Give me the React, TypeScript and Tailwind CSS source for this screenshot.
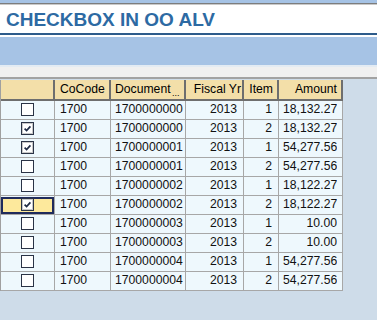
import React from "react";

type Row = { c: boolean; sel?: boolean; doc: string; item: string; amt: string };

const rows: Row[] = [
  { c: false, doc: "1700000000", item: "1", amt: "18,132.27" },
  { c: true, doc: "1700000000", item: "2", amt: "18,132.27" },
  { c: true, doc: "1700000001", item: "1", amt: "54,277.56" },
  { c: false, doc: "1700000001", item: "2", amt: "54,277.56" },
  { c: false, doc: "1700000002", item: "1", amt: "18,122.27" },
  { c: true, sel: true, doc: "1700000002", item: "2", amt: "18,122.27" },
  { c: false, doc: "1700000003", item: "1", amt: "10.00" },
  { c: false, doc: "1700000003", item: "2", amt: "10.00" },
  { c: false, doc: "1700000004", item: "1", amt: "54,277.56" },
  { c: false, doc: "1700000004", item: "2", amt: "54,277.56" },
];

function Box({ checked }: { checked: boolean }) {
  return (
    <div
      className={
        "relative z-10 w-[13px] h-[13px] border border-[#2a3346] bg-white flex items-center justify-center " +
        (checked ? "shadow-[inset_0_0_0_1px_#c9c9c9]" : "")
      }
    >
      {checked && (
        <svg width="9" height="9" viewBox="0 0 9 9">
          <path d="M1.6 4.6 L3.6 6.6 L7.4 2.4" stroke="#1e2a44" strokeWidth="1.7" fill="none" />
        </svg>
      )}
    </div>
  );
}

const hCell =
  "relative h-[21px] bg-[#f3dfa9] border-r-2 border-b-2 border-[#6e6e6e] flex items-center text-[12.2px] text-black whitespace-nowrap overflow-hidden";
const dCell =
  "relative h-[19px] bg-[#eef8fd] border-r border-b border-[#a7a7a7] flex items-center text-[12.2px] text-[#111] whitespace-nowrap overflow-hidden pb-[1px]";

export default function App() {
  return (
    <div className="w-[377px] h-[320px] overflow-hidden bg-[#cedce9] font-['Liberation_Sans',Arial,sans-serif]">
      <div className="h-[3px] bg-[#a6c3e5]" />
      <div className="h-[1px] bg-[#7d7d7d]" />
      <div className="h-[1px] bg-[#c9c9c9]" />
      <div className="h-[28px] bg-white pl-[6px] pt-[5px]">
        <span className="block text-[19px] leading-[19px] font-bold text-[#2d6aa3]">CHECKBOX IN OO ALV</span>
      </div>
      <div className="h-[2px] bg-[#2d5b8a]" />
      <div className="h-[2px] bg-white" />
      <div className="h-[28px] bg-[#a6c3e5]" />
      <div className="h-[2px] bg-[#e3ebf3]" />
      <div className="h-[10px] bg-[#f0f0f0]" />
      <div className="h-[2px] bg-[#a2a2a2]" />
      <div className="h-[1px] bg-[#cedce9]" />

      <div className="w-[343px] border-l border-[#a0a0a0] grid grid-cols-[54px_56px_75px_58px_35px_64px]">
        <div className={hCell} />
        <div className={hCell + " pl-[5px]"}>CoCode</div>
        <div className={hCell + " pl-[4px]"}>
          Document
          <span className="absolute left-[61px] bottom-[1px] text-[9px] leading-[9px]">...</span>
        </div>
        <div className={hCell + " justify-end pr-[1px]"}>Fiscal Yr</div>
        <div className={hCell + " justify-end pr-[4px]"}>Item</div>
        <div className={hCell + " justify-end pr-[4px]"}>Amount</div>

        {rows.map((r, i) => (
          <React.Fragment key={i}>
            <div className={dCell + " justify-center"}>
              {r.sel && (
                <div className="absolute left-0 right-0 top-[1px] bottom-0 bg-[#fde99c] border-2 border-[#1f2b5c]" />
              )}
              <Box checked={r.c} />
            </div>
            <div className={dCell + " pl-[5px]"}>1700</div>
            <div className={dCell + " pl-[4px]"}>{r.doc}</div>
            <div className={dCell + " justify-end pr-[6px]"}>2013</div>
            <div className={dCell + " justify-end pr-[6px]"}>{r.item}</div>
            <div className={dCell + " pl-[4px] pr-[5px]"}>
              <div className="flex-1 overflow-hidden flex justify-end-safe">
                <span>{r.amt}</span>
              </div>
            </div>
          </React.Fragment>
        ))}
      </div>
    </div>
  );
}
